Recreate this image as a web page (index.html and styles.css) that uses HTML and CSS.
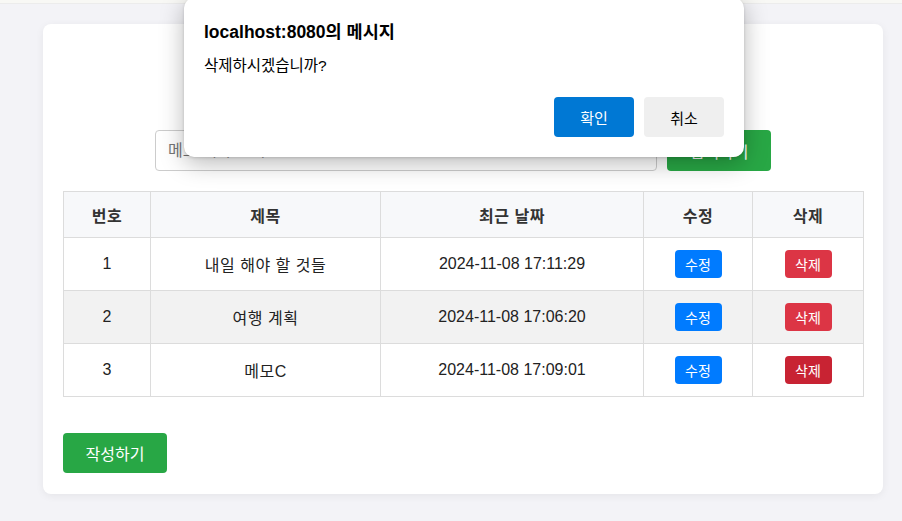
FILE: index.html
```html
<!DOCTYPE html>
<html lang="ko">
<head>
<meta charset="utf-8">
<title>메모 목록</title>
<link rel="stylesheet" href="styles.css">
</head>
<body>
<div class="topstrip"></div>
<main class="page">
  <section class="card">
    <h1 class="title">메모 목록</h1>
    <form class="search">
      <input class="search-input" type="text" placeholder="메모 제목 검색">
      <button class="btn btn-green search-btn" type="button">검색하기</button>
    </form>
    <table class="memo-table">
      <colgroup>
        <col class="c-no"><col class="c-title"><col class="c-date"><col class="c-edit"><col class="c-del">
      </colgroup>
      <thead>
        <tr><th>번호</th><th>제목</th><th>최근 날짜</th><th>수정</th><th>삭제</th></tr>
      </thead>
      <tbody>
        <tr><td>1</td><td class="ko">내일 해야 할 것들</td><td>2024-11-08 17:11:29</td><td><button class="btn-sm blue">수정</button></td><td><button class="btn-sm red">삭제</button></td></tr>
        <tr class="alt"><td>2</td><td class="ko">여행 계획</td><td>2024-11-08 17:06:20</td><td><button class="btn-sm blue">수정</button></td><td><button class="btn-sm red">삭제</button></td></tr>
        <tr><td>3</td><td class="ko">메모C</td><td>2024-11-08 17:09:01</td><td><button class="btn-sm blue">수정</button></td><td><button class="btn-sm red hover">삭제</button></td></tr>
      </tbody>
    </table>
    <button class="btn btn-green create-btn" type="button">작성하기</button>
  </section>
</main>
<div class="dialog" role="dialog">
  <div class="dialog-title">localhost:8080의 메시지</div>
  <div class="dialog-msg">삭제하시겠습니까?</div>
  <div class="dialog-actions">
    <button class="dbtn ok">확인</button>
    <button class="dbtn cancel">취소</button>
  </div>
</div>
</body>
</html>
```

FILE: styles.css
```css
* { box-sizing: border-box; }
html, body { margin: 0; padding: 0; }
body {
  background: #f3f3f7;
  font-family: "Liberation Sans", "Noto Sans CJK KR", sans-serif;
  color: #222;
  width: 902px;
  height: 521px;
  overflow: hidden;
  position: relative;
}
.topstrip {
  height: 4px;
  background: #f8f8f5;
  border-bottom: 1px solid #ececec;
}
.page {
  padding-top: 20px;
}
.card {
  width: 840px;
  margin: 0 0 0 43px;
  background: #fff;
  border-radius: 8px;
  box-shadow: 0 2px 8px rgba(0,0,0,0.06);
  padding: 20px;
  height: 470px;
  display: flex;
  flex-direction: column;
  align-items: flex-start;
}
.title {
  margin: 10px 0 40px;
  height: 36px;
  line-height: 36px;
  font-size: 28px;
  width: 100%;
  text-align: center;
  color: #333;
}
.search {
  display: flex;
  gap: 10px;
  justify-content: center;
  width: 100%;
  margin: 0 0 20px;
}
.search-input {
  width: 502px;
  height: 41px;
  border: 1px solid #ccc;
  border-radius: 4px;
  padding: 0 12px;
  font-size: 16px;
  font-family: inherit;
}
.btn {
  border: none;
  border-radius: 4px;
  color: #fff;
  font-family: inherit;
  font-size: 16px;
  cursor: pointer;
}
.btn-green { background: #28a745; }
.search-btn { width: 104px; height: 41px; }
.memo-table {
  width: 800px;
  border-collapse: collapse;
  table-layout: fixed;
  font-size: 16px;
  color: #222;
}
.c-no { width: 87px; }
.c-title { width: 230px; }
.c-date { width: 263px; }
.c-edit { width: 109px; }
.c-del { width: 111px; }
.memo-table th, .memo-table td {
  border: 1px solid #dcdcdc;
  text-align: center;
  padding: 0;
}
.memo-table th {
  background: #f7f8fa;
  height: 46px;
  font-weight: bold;
  color: #333;
  letter-spacing: 0.5px;
}
.memo-table td { height: 53px; }
.memo-table td.ko { letter-spacing: 0.5px; }
.memo-table tr.alt td { background: #f2f2f2; }
.btn-sm {
  border: none;
  border-radius: 4px;
  color: #fff;
  font-family: inherit;
  font-size: 14px;
  width: 47px;
  height: 28px;
  padding: 0;
  vertical-align: middle;
}
.btn-sm.blue { background: #007bff; }
.btn-sm.red { background: #dc3545; }
.btn-sm.red.hover { background: #c82333; }
.create-btn {
  margin-top: 36px;
  width: 104px;
  height: 40px;
}
.dialog {
  position: absolute;
  left: 184px;
  top: -2px;
  width: 560px;
  height: 159px;
  background: #fff;
  border-radius: 10px;
  box-shadow: 0 6px 24px rgba(0,0,0,0.28), 0 1px 3px rgba(0,0,0,0.15);
  padding: 22px 20px 20px;
  display: flex;
  flex-direction: column;
}
.dialog-title {
  font-weight: bold;
  font-size: 17.5px;
  line-height: 24px;
  color: #000;
}
.dialog-msg {
  margin-top: 12px;
  font-size: 15.5px;
  line-height: 20px;
  color: #000;
}
.dialog-actions {
  margin-top: auto;
  display: flex;
  justify-content: flex-end;
  gap: 10px;
}
.dbtn {
  width: 80px;
  height: 40px;
  border: none;
  border-radius: 4px;
  font-family: inherit;
  font-size: 15px;
}
.dbtn.ok { background: #0078d4; color: #fff; }
.dbtn.cancel { background: #efefef; color: #000; }
```
